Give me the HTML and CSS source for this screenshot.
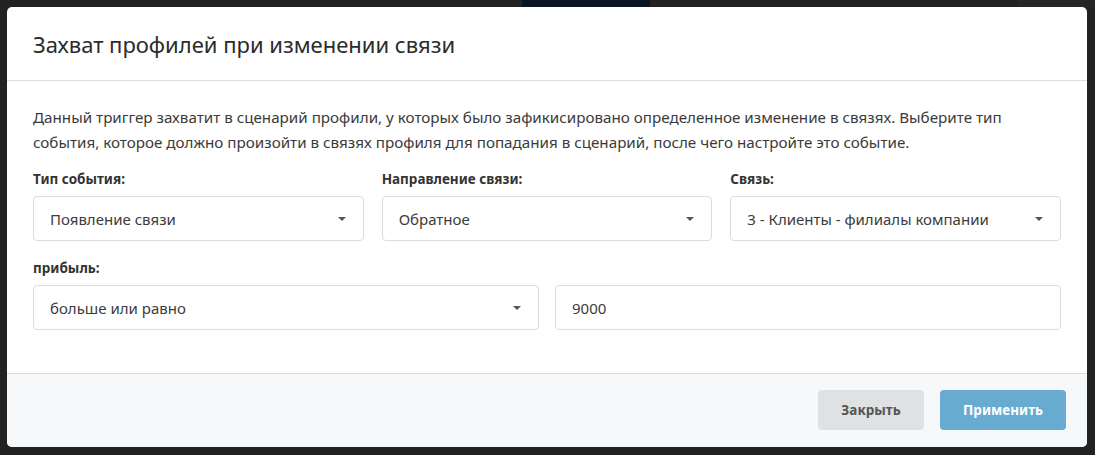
FILE: index.html
```html
<!DOCTYPE html>
<html lang="ru">
<head>
<meta charset="utf-8">
<link rel="stylesheet" href="styles.css">
</head>
<body>
<div class="modal">
  <div class="modal-header">
    <h1 class="modal-title">Захват профилей при изменении связи</h1>
  </div>
  <div class="modal-body">
    <p class="intro">Данный триггер захватит в сценарий профили, у которых было зафикисировано определенное изменение в связях. Выберите тип события, которое должно произойти в связях профиля для попадания в сценарий, после чего настройте это событие.</p>
    <div class="row row-3">
      <div class="field">
        <label class="label">Тип события:</label>
        <div class="select"><span>Появление связи</span><i class="caret"></i></div>
      </div>
      <div class="field">
        <label class="label">Направление связи:</label>
        <div class="select"><span>Обратное</span><i class="caret"></i></div>
      </div>
      <div class="field">
        <label class="label">Связь:</label>
        <div class="select"><span>3 - Клиенты - филиалы компании</span><i class="caret"></i></div>
      </div>
    </div>
    <div class="field">
      <label class="label">прибыль:</label>
      <div class="row row-2">
        <div class="select"><span>больше или равно</span><i class="caret"></i></div>
        <div class="input">9000</div>
      </div>
    </div>
  </div>
  <div class="modal-footer">
    <button class="btn btn-secondary">Закрыть</button>
    <button class="btn btn-primary">Применить</button>
  </div>
</div>
</body>
</html>
```

FILE: styles.css
```css
* { box-sizing: border-box; }
html, body { margin: 0; padding: 0; }
body {
  width: 1095px;
  height: 455px;
  overflow: hidden;
  background:
    linear-gradient(#0b1423, #0b1423) 522px 0 / 128px 7px no-repeat,
    linear-gradient(#262626, #262626) 1017px 0 / 78px 7px no-repeat,
    #222222;
  font-family: "Noto Sans", "Open Sans", sans-serif;
  color: #333;
  padding: 7px 8px 8px 7px;
}
.modal {
  width: 1080px;
  height: 440px;
  background: #fff;
  border-radius: 5px;
  display: flex;
  flex-direction: column;
  overflow: hidden;
}
.modal-header {
  height: 74px;
  padding: 0 26px;
  display: flex;
  align-items: center;
  border-bottom: 1px solid #dedede;
}
.modal-title {
  margin: 0;
  font-size: 22px;
  font-weight: 400;
  color: #2b2b2b;
}
.modal-body {
  flex: 1;
  padding: 24px 26px 0;
}
.intro {
  margin: 0 0 15px;
  font-size: 15.2px;
  line-height: 25px;
  color: #3a3a3a;
}
.row { display: grid; }
.row-3 { grid-template-columns: 1fr 1fr 1fr; column-gap: 18px; margin-bottom: 18px; }
.row-2 { grid-template-columns: 1fr 1fr; column-gap: 16px; }
.label {
  display: block;
  font-size: 13.5px;
  font-weight: 700;
  color: #333;
  line-height: 18px;
  margin-bottom: 8px;
}
.select, .input {
  height: 45px;
  border: 1px solid #dcdcdc;
  border-radius: 4px;
  display: flex;
  align-items: center;
  padding: 0 16px;
  font-size: 15px;
  color: #3c3c3c;
  background: #fff;
}
.select span { flex: 1; }
.caret {
  width: 0; height: 0;
  border-left: 4.5px solid transparent;
  border-right: 4.5px solid transparent;
  border-top: 4.5px solid #555;
  margin-right: 1px;
}
.modal-footer {
  height: 74px;
  border-top: 1px solid #dadada;
  background: #f7f8fa;
  display: flex;
  align-items: center;
  justify-content: flex-end;
  gap: 16px;
  padding: 0 21px 1px 0;
}
.btn {
  height: 40px;
  border: none;
  border-radius: 4px;
  font-family: inherit;
  font-size: 13.5px;
  font-weight: 700;
  padding: 0;
}
.btn-secondary { width: 106px; background: #e0e1e3; color: #555; }
.btn-primary { width: 126px; background: #67abd0; color: #fff; }
```
